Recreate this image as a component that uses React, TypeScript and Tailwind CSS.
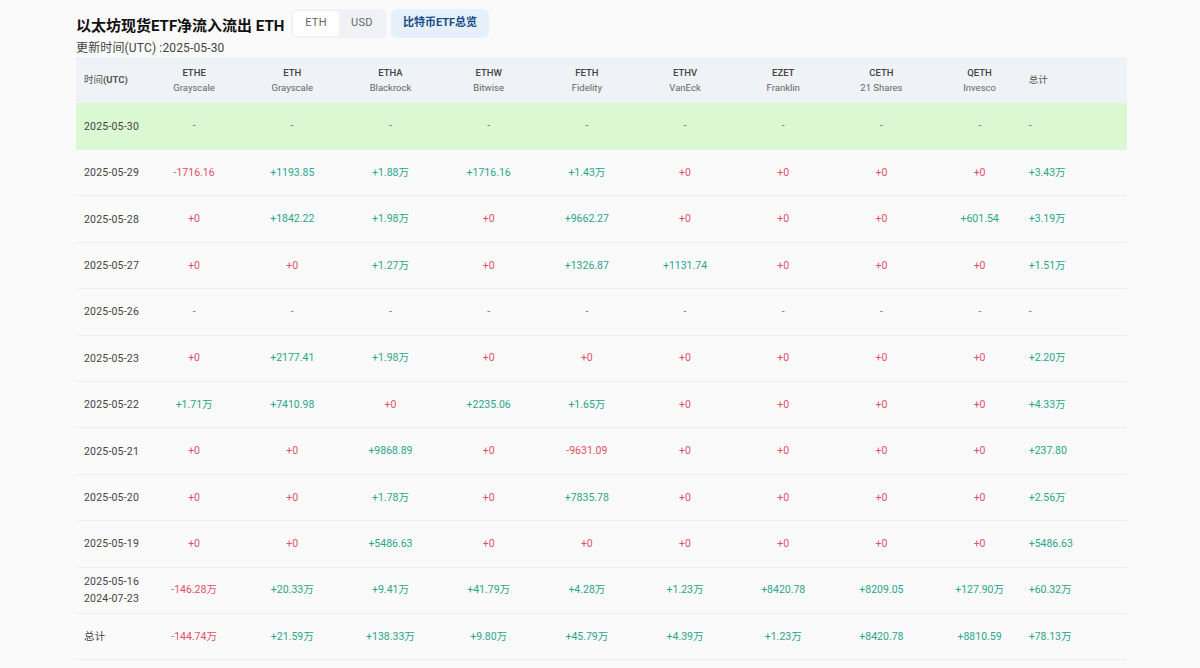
const cols = [
  ['ETHE', 'Grayscale'],
  ['ETH', 'Grayscale'],
  ['ETHA', 'Blackrock'],
  ['ETHW', 'Bitwise'],
  ['FETH', 'Fidelity'],
  ['ETHV', 'VanEck'],
  ['EZET', 'Franklin'],
  ['CETH', '21 Shares'],
  ['QETH', 'Invesco'],
];

const rows: { date: string[]; values: string[]; green?: boolean }[] = [
  { date: ['2025-05-30'], green: true, values: ['-', '-', '-', '-', '-', '-', '-', '-', '-', '-'] },
  { date: ['2025-05-29'], values: ['-1716.16', '+1193.85', '+1.88万', '+1716.16', '+1.43万', '+0', '+0', '+0', '+0', '+3.43万'] },
  { date: ['2025-05-28'], values: ['+0', '+1842.22', '+1.98万', '+0', '+9662.27', '+0', '+0', '+0', '+601.54', '+3.19万'] },
  { date: ['2025-05-27'], values: ['+0', '+0', '+1.27万', '+0', '+1326.87', '+1131.74', '+0', '+0', '+0', '+1.51万'] },
  { date: ['2025-05-26'], values: ['-', '-', '-', '-', '-', '-', '-', '-', '-', '-'] },
  { date: ['2025-05-23'], values: ['+0', '+2177.41', '+1.98万', '+0', '+0', '+0', '+0', '+0', '+0', '+2.20万'] },
  { date: ['2025-05-22'], values: ['+1.71万', '+7410.98', '+0', '+2235.06', '+1.65万', '+0', '+0', '+0', '+0', '+4.33万'] },
  { date: ['2025-05-21'], values: ['+0', '+0', '+9868.89', '+0', '-9631.09', '+0', '+0', '+0', '+0', '+237.80'] },
  { date: ['2025-05-20'], values: ['+0', '+0', '+1.78万', '+0', '+7835.78', '+0', '+0', '+0', '+0', '+2.56万'] },
  { date: ['2025-05-19'], values: ['+0', '+0', '+5486.63', '+0', '+0', '+0', '+0', '+0', '+0', '+5486.63'] },
  { date: ['2025-05-16', '2024-07-23'], values: ['-146.28万', '+20.33万', '+9.41万', '+41.79万', '+4.28万', '+1.23万', '+8420.78', '+8209.05', '+127.90万', '+60.32万'] },
  { date: ['总计'], values: ['-144.74万', '+21.59万', '+138.33万', '+9.80万', '+45.79万', '+4.39万', '+1.23万', '+8420.78', '+8810.59', '+78.13万'] },
];

// green for inflow, red for outflow and for a flat +0
function tone(v: string) {
  if (v === '-') return 'text-[#777]';
  if (v === '+0' || v.startsWith('-')) return 'text-[#e0506a]';
  return 'text-[#2aa58c]';
}

export default function App() {
  return (
    <div className="h-[668px] overflow-hidden bg-[#fafafa] pl-[76px] pr-[73px] pt-[9px] font-['Roboto','Noto_Sans_CJK_SC',sans-serif] text-[#333]">
      <div className="flex h-[29px] items-center">
        <h1 className="mt-[6px] w-[215px] text-[15px] font-bold whitespace-nowrap text-[#111]">
          以太坊现货ETF净流入流出 ETH
        </h1>
        <div className="flex h-[29px] w-[96px] rounded-md bg-[#f0f2f5] p-[2px] text-[11px] tracking-[0.3px]">
          <div className="flex w-[46px] items-center justify-center rounded bg-white text-[#666]">ETH</div>
          <div className="flex flex-1 items-center justify-center text-[#666]">USD</div>
        </div>
        <div className="ml-1 flex h-[29px] w-[98px] items-center justify-center rounded-md bg-[#e6f0fa] text-[11px] font-bold text-[#1a4a85]">
          比特币ETF总览
        </div>
      </div>
      <div className="mt-[1px] h-[18px] text-[12px] leading-[18px] tracking-[0.15px] text-[#444]">更新时间(UTC) :2025-05-30</div>
      <table className="w-[1051px] table-fixed border-collapse text-[10.5px]">
        <colgroup>
          <col className="w-[69px]" />
          {cols.map((c) => (
            <col key={c[0]} className="w-[98.2px]" />
          ))}
          <col />
        </colgroup>
        <thead>
          <tr className="h-[46px] bg-[#eff2f6]">
            <th className="pl-2 text-left text-[9.5px] font-normal text-[#555]">
              时间<span className="font-bold">(UTC)</span>
            </th>
            {cols.map((c) => (
              <th key={c[0]} className="text-center text-[9.5px] leading-[15px] font-normal">
                <div className="font-medium text-[#444]">{c[0]}</div>
                <div className="text-[#666]">{c[1]}</div>
              </th>
            ))}
            <th className="text-left text-[9.5px] font-normal text-[#555]">总计</th>
          </tr>
        </thead>
        <tbody>
          {rows.map((r) => (
            <tr key={r.date[0]} className={r.green ? 'h-[46.5px] bg-[#daf8d2]' : 'h-[46.4px] border-b border-[#eceef0]'}>
              <td className="pl-2 leading-[17px] tracking-[0.2px] whitespace-nowrap text-[#444]">
                {r.date.map((d) => (
                  <div key={d}>{d}</div>
                ))}
              </td>
              {r.values.map((v, i) => (
                <td key={i} className={`${i === 9 ? 'text-left' : 'text-center'} ${tone(v)}`}>
                  {v}
                </td>
              ))}
            </tr>
          ))}
        </tbody>
      </table>
    </div>
  );
}
